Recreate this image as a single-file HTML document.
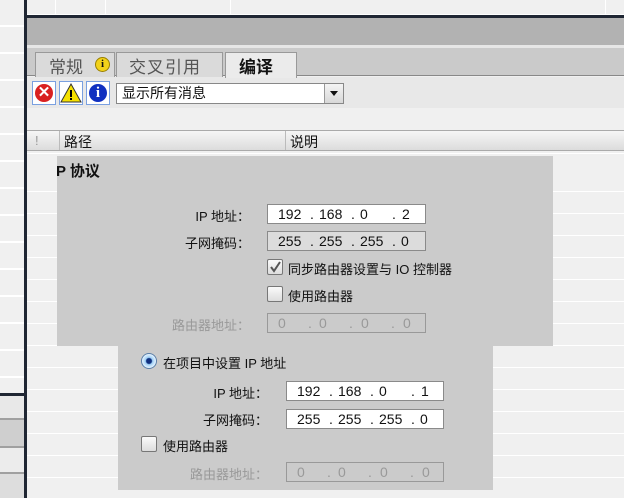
<!DOCTYPE html><html><head><meta charset="utf-8"><style>
*{margin:0;padding:0;box-sizing:border-box}
body{width:624px;height:498px;overflow:hidden;position:relative;background:#f0f0f0;font-family:"Liberation Sans","Noto Sans CJK SC",sans-serif;font-size:13px;color:#111}
.a{position:absolute}
.f{position:absolute;background:#fff;border:1px solid #8a8a8a;height:20px;font-size:14px;line-height:18px;white-space:pre}
.f span{position:absolute;top:0}
.f.g{background:#dcdcdc}
.f.d{background:#cbcbcb;color:#999;border-color:#999}
.l{position:absolute;text-align:right;font-size:13px;white-space:nowrap}
.cb{position:absolute;width:16px;height:16px;border:1px solid #777;border-radius:2px;background:linear-gradient(#fafafa,#ddd)}
</style></head><body>
<div class="a" style="left:0;top:0;width:24px;height:393px;background:#f0f0f0;background-image:repeating-linear-gradient(#f0f0f0 0 25px,#fff 25px 27px)"></div>
<div class="a" style="left:0;top:393px;width:24px;height:3px;background:#1f2633"></div>
<div class="a" style="left:0;top:396px;width:24px;height:102px;background:linear-gradient(#e8e8e8 0 22px,#a0a0a0 22px 24px,#cfcfcf 24px 50px,#a0a0a0 50px 52px,#ececec 52px 76px,#a0a0a0 76px 78px,#ddd 78px)"></div>
<div class="a" style="left:24px;top:0;width:3px;height:498px;background:#1f2633"></div>
<div class="a" style="left:27px;top:0;width:597px;height:15px;background:#f0f0f0;border-bottom:1px solid #fff"></div>
<div class="a" style="left:55px;top:0;width:1px;height:15px;background:#fff"></div>
<div class="a" style="left:105px;top:0;width:1px;height:15px;background:#fff"></div>
<div class="a" style="left:230px;top:0;width:1px;height:15px;background:#fff"></div>
<div class="a" style="left:605px;top:0;width:1px;height:15px;background:#fff"></div>
<div class="a" style="left:27px;top:15px;width:597px;height:3px;background:#1f2633"></div>
<div class="a" style="left:27px;top:18px;width:597px;height:27px;background:#b2b2b2"></div>
<div class="a" style="left:27px;top:45px;width:597px;height:3px;background:#e6e6e6"></div>
<div class="a" style="left:27px;top:48px;width:597px;height:28px;background:#cacaca;border-bottom:1px solid #888"></div>
<div class="a" style="left:27px;top:77px;width:597px;height:31px;background:#e8e8e8"></div>
<div class="a" style="left:35px;top:52px;width:80px;height:25px;background:#dadada;border:1px solid #999;border-bottom:none;font-size:17px;color:#555;padding:0 0 0 13px">常规</div>
<div class="a" style="left:95px;top:57px;width:15px;height:15px;border-radius:50%;background:#f2d21a;border:1px solid #9a8000;font:bold 11px 'Liberation Serif',serif;text-align:center;line-height:13px">i</div>
<div class="a" style="left:116px;top:52px;width:107px;height:25px;background:#dadada;border:1px solid #999;border-bottom:none;font-size:17px;color:#555;padding:0 0 0 12px;letter-spacing:1px">交叉引用</div>
<div class="a" style="left:225px;top:52px;width:72px;height:26px;background:#ebebeb;border:1px solid #999;border-bottom:none;font-size:17px;font-weight:bold;padding:0 0 0 13px">编译</div>
<div class="a" style="left:32px;top:81px;width:24px;height:24px;border:1px solid #7aa0e0;background:#fff"><div class="a" style="left:2px;top:2px;width:18px;height:18px;border-radius:50%;background:#d92020;color:#fff;font:bold 15px/18px sans-serif;text-align:center">✕</div></div>
<div class="a" style="left:59px;top:81px;width:24px;height:24px;border:1px solid #7aa0e0;background:#fff"><svg width="22" height="22" class="a" style="left:0;top:0"><path d="M11 2 L21 20 L1 20Z" fill="#f5e000" stroke="#333"/><rect x="10" y="8" width="2" height="7" fill="#000"/><rect x="10" y="16" width="2" height="2" fill="#000"/></svg></div>
<div class="a" style="left:86px;top:81px;width:24px;height:24px;border:1px solid #7aa0e0;background:#fff"><div class="a" style="left:2px;top:2px;width:18px;height:18px;border-radius:50%;background:#1030c0;color:#fff;font:bold 15px/18px 'Liberation Serif',serif;text-align:center">i</div></div>
<div class="a" style="left:116px;top:83px;width:228px;height:21px;background:#fff;border:1px solid #888;font-size:14px;line-height:19px;padding-left:5px">显示所有消息</div>
<div class="a" style="left:324px;top:84px;width:19px;height:19px;background:linear-gradient(#f4f4f4,#d8d8d8);border-left:1px solid #999"><div class="a" style="left:5px;top:7px;border:4px solid transparent;border-top:5px solid #111"></div></div>
<div class="a" style="left:27px;top:130px;width:597px;height:21px;background:linear-gradient(#f6f6f6,#dcdcdc);border-top:1px solid #aaa;border-bottom:1px solid #aaa"></div>
<div class="a" style="left:35px;top:133px;color:#999">!</div>
<div class="a" style="left:59px;top:131px;width:1px;height:19px;background:#bbb"></div>
<div class="a" style="left:64px;top:132px;font-size:14px">路径</div>
<div class="a" style="left:285px;top:131px;width:1px;height:19px;background:#bbb"></div>
<div class="a" style="left:290px;top:132px;font-size:14px">说明</div>
<div class="a" style="left:27px;top:152px;width:597px;height:346px;background-image:repeating-linear-gradient(#f0f0f0 0 21px,#fff 21px 22px);background-position:0 18px"></div>
<div class="a" style="left:57px;top:156px;width:496px;height:190px;background:#cbcbcb"></div>
<div class="a" style="left:118px;top:346px;width:375px;height:144px;background:#cbcbcb"></div>
<div class="a" style="left:56px;top:160px;font-size:15px;font-weight:bold">P 协议</div>
<div class="l" style="right:374px;top:206px">IP 地址：</div>
<div class="f" style="left:267px;top:204px;width:159px"><span style="left:10px">192</span><span style="left:42px">.</span><span style="left:51px">168</span><span style="left:83px">.</span><span style="left:92px">0</span><span style="left:124px">.</span><span style="left:134px">2</span></div>
<div class="l" style="right:374px;top:233px">子网掩码：</div>
<div class="f g" style="left:267px;top:231px;width:159px"><span style="left:10px">255</span><span style="left:42px">.</span><span style="left:51px">255</span><span style="left:83px">.</span><span style="left:92px">255</span><span style="left:124px">.</span><span style="left:133px">0</span></div>
<div class="cb" style="left:267px;top:259px"><svg width="14" height="14" class="a" style="left:0;top:0"><path d="M3 7 L6 11 L12 2" stroke="#555" stroke-width="2" fill="none"/></svg></div>
<div class="a" style="left:288px;top:259px">同步路由器设置与 IO 控制器</div>
<div class="cb" style="left:267px;top:286px"></div>
<div class="a" style="left:288px;top:286px">使用路由器</div>
<div class="l" style="right:374px;top:315px;color:#999">路由器地址：</div>
<div class="f d" style="left:267px;top:313px;width:159px"><span style="left:10px">0</span><span style="left:40px">.</span><span style="left:51px">0</span><span style="left:81px">.</span><span style="left:93px">0</span><span style="left:123px">.</span><span style="left:135px">0</span></div>
<div class="a" style="left:141px;top:353px;width:16px;height:16px;border-radius:50%;border:1px solid #5a7fa8;background:radial-gradient(#103080 0 2.5px,#9fd0f5 3.5px,#e8f4ff 7px)"></div>
<div class="a" style="left:163px;top:353px">在项目中设置 IP 地址</div>
<div class="l" style="right:356px;top:383px">IP 地址：</div>
<div class="f" style="left:286px;top:381px;width:158px"><span style="left:10px">192</span><span style="left:42px">.</span><span style="left:51px">168</span><span style="left:83px">.</span><span style="left:92px">0</span><span style="left:124px">.</span><span style="left:134px">1</span></div>
<div class="l" style="right:356px;top:410px">子网掩码：</div>
<div class="f" style="left:286px;top:409px;width:158px"><span style="left:10px">255</span><span style="left:42px">.</span><span style="left:51px">255</span><span style="left:83px">.</span><span style="left:92px">255</span><span style="left:124px">.</span><span style="left:133px">0</span></div>
<div class="cb" style="left:141px;top:436px"></div>
<div class="a" style="left:163px;top:436px">使用路由器</div>
<div class="l" style="right:356px;top:464px;color:#999">路由器地址：</div>
<div class="f d" style="left:286px;top:462px;width:158px"><span style="left:10px">0</span><span style="left:40px">.</span><span style="left:51px">0</span><span style="left:81px">.</span><span style="left:93px">0</span><span style="left:123px">.</span><span style="left:135px">0</span></div>
</body></html>
